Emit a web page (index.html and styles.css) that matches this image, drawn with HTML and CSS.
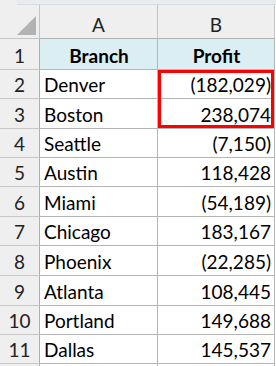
FILE: index.html
```html
<!DOCTYPE html>
<html>
<head>
<meta charset="utf-8">
<link rel="stylesheet" href="styles.css">
</head>
<body>
<div class="topstrip"><div class="strip-left"></div><div class="strip-right"></div></div>
<div class="sheet">
  <div class="grid">
    <div class="corner"><svg width="19" height="19" viewBox="0 0 19 19"><polygon points="19,0 19,19 0,19" fill="#b3b3b3"/></svg></div>
    <div class="colhead">A</div>
    <div class="colhead">B</div>

    <div class="rowhead">1</div><div class="cell title">Branch</div><div class="cell title">Profit</div>
    <div class="rowhead">2</div><div class="cell">Denver</div><div class="cell num">(182,029)</div>
    <div class="rowhead">3</div><div class="cell">Boston</div><div class="cell num">238,074</div>
    <div class="rowhead">4</div><div class="cell">Seattle</div><div class="cell num">(7,150)</div>
    <div class="rowhead">5</div><div class="cell">Austin</div><div class="cell num">118,428</div>
    <div class="rowhead">6</div><div class="cell">Miami</div><div class="cell num">(54,189)</div>
    <div class="rowhead">7</div><div class="cell">Chicago</div><div class="cell num">183,167</div>
    <div class="rowhead">8</div><div class="cell">Phoenix</div><div class="cell num">(22,285)</div>
    <div class="rowhead">9</div><div class="cell">Atlanta</div><div class="cell num">108,445</div>
    <div class="rowhead">10</div><div class="cell">Portland</div><div class="cell num">149,688</div>
    <div class="rowhead">11</div><div class="cell">Dallas</div><div class="cell num">145,537</div>
    <div class="rowhead empty"></div><div class="cell empty"></div><div class="cell empty"></div>
  </div>
  <div class="highlight"></div>
</div>
</body>
</html>
```

FILE: styles.css
```css
html, body {
  margin: 0;
  padding: 0;
  background: #ffffff;
  overflow: hidden;
}
body {
  width: 276px;
  height: 366px;
  font-family: Lato, "Open Sans", sans-serif;
  font-size: 19px;
  color: #000;
}
.topstrip {
  display: flex;
  height: 5px;
}
.strip-left {
  width: 17px;
  background: #efefef;
}
.strip-right {
  flex: 1;
  background: #e9ecef;
  border-bottom: 1px solid #dcdcdc;
}
.sheet {
  position: relative;
}
.grid {
  display: grid;
  grid-template-columns: 40px 118px 117px 1px;
  grid-template-rows: 34px 31px 29px 30px 29px 29px 30px 29px 30px 30px 29px 29px 10px;
}
.grid > div {
  box-sizing: border-box;
  border-right: 1px solid #b5b5b5;
  border-bottom: 1px solid #b5b5b5;
  display: flex;
  align-items: flex-end;
  line-height: 23px;
  padding-bottom: 2px;
  grid-column: auto;
}
.grid > div:nth-child(3n+1) {
  grid-column: 1;
}
.corner {
  background: #efefef;
  justify-content: flex-end;
  padding-right: 3px;
  padding-bottom: 3px !important;
  border-right-color: #c4c4c4 !important;
  border-bottom-color: #c4c4c4 !important;
}
.colhead {
  background: #efefef;
  justify-content: center;
  color: #222;
  border-right-color: #c4c4c4 !important;
  border-bottom-color: #b0b0b0 !important;
}
.rowhead {
  background: #efefef;
  justify-content: center;
  color: #222;
  border-right-color: #b0b0b0 !important;
  border-bottom-color: #c8c8c8 !important;
}
.cell {
  padding-left: 4px;
  padding-right: 3px;
}
.title {
  background: #daeef3;
  font-weight: 700;
  justify-content: center;
}
.num {
  justify-content: flex-end;
}
.empty {
  border-bottom: none !important;
}
.highlight {
  position: absolute;
  left: 158px;
  top: 65px;
  width: 116px;
  height: 58px;
  box-sizing: border-box;
  border: 3px solid #ff0000;
}
```
